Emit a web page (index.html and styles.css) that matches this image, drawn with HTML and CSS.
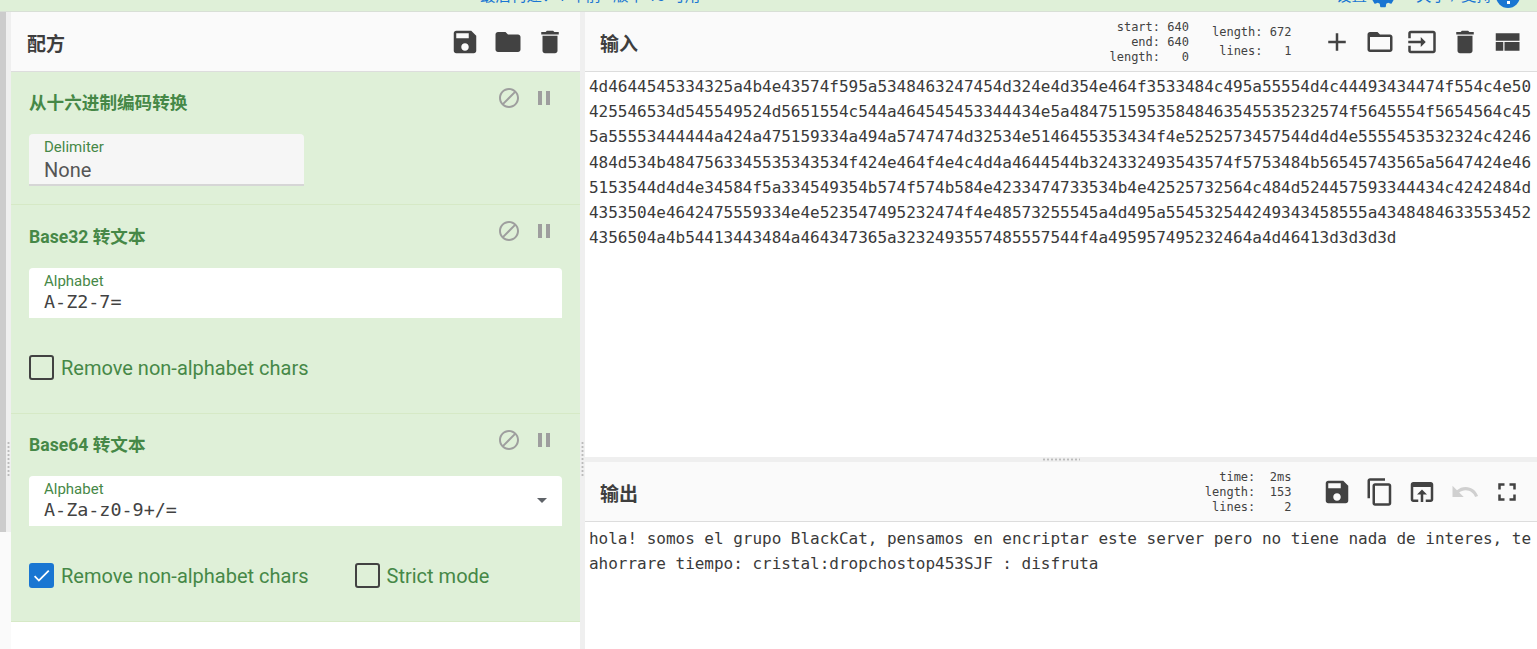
FILE: index.html
```html
<!DOCTYPE html>
<html lang="zh">
<head>
<meta charset="utf-8">
<title>CyberChef</title>
<link rel="stylesheet" href="styles.css">
</head>
<body>
<svg class="sprite" width="0" height="0">
  <symbol id="i-save" viewBox="0 0 24 24"><path d="M17 3H5c-1.11 0-2 .9-2 2v14c0 1.1.89 2 2 2h14c1.1 0 2-.9 2-2V7l-4-4zm-5 16c-1.66 0-3-1.34-3-3s1.34-3 3-3 3 1.34 3 3-1.34 3-3 3zm3-10H5V5h10v4z"/></symbol>
  <symbol id="i-folder" viewBox="0 0 24 24"><path d="M10 4H4c-1.1 0-1.99.9-1.99 2L2 18c0 1.1.9 2 2 2h16c1.1 0 2-.9 2-2V8c0-1.1-.9-2-2-2h-8l-2-2z"/></symbol>
  <symbol id="i-delete" viewBox="0 0 24 24"><path d="M6 19c0 1.1.9 2 2 2h8c1.1 0 2-.9 2-2V7H6v12zM19 4h-3.5l-1-1h-5l-1 1H5v2h14V4z"/></symbol>
  <symbol id="i-block" viewBox="0 0 24 24"><path d="M12 2C6.48 2 2 6.48 2 12s4.48 10 10 10 10-4.48 10-10S17.52 2 12 2zM4 12c0-4.42 3.58-8 8-8 1.85 0 3.55.63 4.9 1.69L5.69 16.9C4.63 15.55 4 13.85 4 12zm8 8c-1.85 0-3.55-.63-4.9-1.69L18.31 7.1C19.37 8.45 20 10.15 20 12c0 4.42-3.58 8-8 8z"/></symbol>
  <symbol id="i-pause" viewBox="0 0 24 24"><path d="M6 19h4V5H6v14zm8-14v14h4V5h-4z"/></symbol>
</svg>

<header class="banner">
  <div class="banner-center">最后构建：1 年前 - 版本 10 可用</div>
  <div class="banner-right">
    <span class="banner-link">设置</span>
    <svg class="gear" viewBox="0 0 24 24"><path d="M19.14 12.94c.04-.3.06-.61.06-.94 0-.32-.02-.64-.07-.94l2.03-1.58c.18-.14.23-.41.12-.61l-1.92-3.32c-.12-.22-.37-.29-.59-.22l-2.39.96c-.5-.38-1.03-.7-1.62-.94l-.36-2.54c-.04-.24-.24-.41-.48-.41h-3.84c-.24 0-.43.17-.47.41l-.36 2.54c-.59.24-1.13.57-1.62.94l-2.39-.96c-.22-.08-.47 0-.59.22L2.74 8.87c-.12.21-.08.47.12.61l2.03 1.58c-.05.3-.09.63-.09.94s.02.64.07.94l-2.03 1.58c-.18.14-.23.41-.12.61l1.92 3.32c.12.22.37.29.59.22l2.39-.96c.5.38 1.03.7 1.62.94l.36 2.54c.05.24.24.41.48.41h3.84c.24 0 .44-.17.47-.41l.36-2.54c.59-.24 1.13-.56 1.62-.94l2.39.96c.22.08.47 0 .59-.22l1.92-3.32c.12-.22.07-.47-.12-.61l-2.01-1.58z"/></svg>
    <span class="banner-link about">关于 / 支持</span>
    <span class="info-dot"></span>
  </div>
</header>

<main class="workspace">
  <div class="left-rail"><span class="rail-thumb"></span><span class="grip-v"></span></div>

  <section class="recipe">
    <div class="pane-head">
      <h2 class="pane-title">配方</h2>
      <div class="icons">
        <svg class="icon"><use href="#i-save"/></svg>
        <svg class="icon"><use href="#i-folder"/></svg>
        <svg class="icon"><use href="#i-delete"/></svg>
      </div>
    </div>

    <article class="op op-first">
      <div class="op-head">
        <h3 class="op-title">从十六进制编码转换</h3>
        <div class="op-icons"><svg class="op-icon"><use href="#i-block"/></svg><svg class="op-icon"><use href="#i-pause"/></svg></div>
      </div>
      <div class="field field-short">
        <label class="field-label">Delimiter</label>
        <div class="field-value plain">None</div>
      </div>
    </article>

    <article class="op op-second">
      <div class="op-head">
        <h3 class="op-title">Base32 转文本</h3>
        <div class="op-icons"><svg class="op-icon"><use href="#i-block"/></svg><svg class="op-icon"><use href="#i-pause"/></svg></div>
      </div>
      <div class="field">
        <label class="field-label">Alphabet</label>
        <div class="field-value">A-Z2-7=</div>
      </div>
      <div class="checks">
        <span class="check"><span class="box"></span>Remove non-alphabet chars</span>
      </div>
    </article>

    <article class="op op-third">
      <div class="op-head">
        <h3 class="op-title">Base64 转文本</h3>
        <div class="op-icons"><svg class="op-icon"><use href="#i-block"/></svg><svg class="op-icon"><use href="#i-pause"/></svg></div>
      </div>
      <div class="field">
        <label class="field-label">Alphabet</label>
        <div class="field-value">A-Za-z0-9+/=</div>
        <span class="caret"></span>
      </div>
      <div class="checks">
        <span class="check"><span class="box checked"><svg viewBox="0 0 24 24"><path d="M9 16.17L4.83 12l-1.41 1.41L9 19 21 7l-1.41-1.41z"/></svg></span>Remove non-alphabet chars</span>
        <span class="check"><span class="box"></span>Strict mode</span>
      </div>
    </article>
  </section>

  <div class="mid-gutter"><span class="grip-v"></span></div>

  <section class="io">
    <div class="io-input">
      <div class="pane-head">
        <h2 class="pane-title">输入</h2>
        <div class="head-tools">
          <div class="stats stats-tight"> start: 640
   end: 640
length:   0</div>
          <div class="stats stats-loose">length: 672
 lines:   1</div>
          <div class="icons">
            <svg class="icon" viewBox="0 0 24 24"><path d="M19 13h-6v6h-2v-6H5v-2h6V5h2v6h6v2z"/></svg>
            <svg class="icon" viewBox="0 0 24 24"><path d="M20 6h-8l-2-2H4c-1.1 0-1.99.9-1.99 2L2 18c0 1.1.9 2 2 2h16c1.1 0 2-.9 2-2V8c0-1.1-.9-2-2-2zm0 12H4V8h16v10z"/></svg>
            <svg class="icon" viewBox="0 0 24 24"><path d="M21 3.01H3c-1.1 0-2 .9-2 2V9h2V4.99h18v14.03H3V15H1v4.01c0 1.1.9 1.98 2 1.98h18c1.1 0 2-.88 2-1.98v-14c0-1.11-.9-2-2-2zM11 16l4-4-4-4v3H1v2h10v3z"/></svg>
            <svg class="icon"><use href="#i-delete"/></svg>
            <svg class="icon" viewBox="0 0 24 24"><path d="M3 19h6v-7H3v7zm7 0h12v-7H10v7zM3 5v6h19V5H3z"/></svg>
          </div>
        </div>
      </div>
      <pre class="text-area">4d4644545334325a4b4e43574f595a5348463247454d324e4d354e464f3533484c495a55554d4c44493434474f554c4e50
425546534d545549524d5651554c544a464545453344434e5a48475159535848463545535232574f5645554f5654564c45
5a55553444444a424a475159334a494a5747474d32534e5146455353434f4e5252573457544d4d4e5555453532324c4246
484d534b4847563345535343534f424e464f4e4c4d4a4644544b324332493543574f5753484b56545743565a5647424e46
5153544d4d4e34584f5a334549354b574f574b584e4233474733534b4e42525732564c484d524457593344434c4242484d
4353504e4642475559334e4e523547495232474f4e48573255545a4d495a554532544249343458555a4348484633553452
4356504a4b54413443484a464347365a3232493557485557544f4a495957495232464a4d46413d3d3d3d</pre>
    </div>

    <div class="h-gutter"><span class="grip-h"></span></div>

    <div class="io-output">
      <div class="pane-head">
        <h2 class="pane-title">输出</h2>
        <div class="head-tools">
          <div class="stats stats-tight">  time:  2ms
length:  153
 lines:    2</div>
          <div class="icons">
            <svg class="icon"><use href="#i-save"/></svg>
            <svg class="icon" viewBox="0 0 24 24"><path d="M16 1H4c-1.1 0-2 .9-2 2v14h2V3h12V1zm3 4H8c-1.1 0-2 .9-2 2v14c0 1.1.9 2 2 2h11c1.1 0 2-.9 2-2V7c0-1.1-.9-2-2-2zm0 16H8V7h11v14z"/></svg>
            <svg class="icon" viewBox="0 0 24 24"><path d="M19 4H5c-1.11 0-2 .9-2 2v12c0 1.1.89 2 2 2h4v-2H5V8h14v10h-4v2h4c1.1 0 2-.9 2-2V6c0-1.1-.89-2-2-2zm-7 6l-4 4h3v6h2v-6h3l-4-4z"/></svg>
            <svg class="icon disabled" viewBox="0 0 24 24"><path d="M12.5 8c-2.65 0-5.05.99-6.9 2.6L2 7v9h9l-3.62-3.62c1.39-1.16 3.16-1.88 5.12-1.88 3.54 0 6.55 2.31 7.6 5.5l2.37-.78C21.08 11.03 17.15 8 12.5 8z"/></svg>
            <svg class="icon" viewBox="0 0 24 24"><path d="M7 14H5v5h5v-2H7v-3zm-2-4h2V7h3V5H5v5zm12 7h-3v2h5v-5h-2v3zM14 5v2h3v3h2V5h-5z"/></svg>
          </div>
        </div>
      </div>
      <pre class="text-area output-text">hola! somos el grupo BlackCat, pensamos en encriptar este server pero no tiene nada de interes, te
ahorrare tiempo: cristal:dropchostop453SJF : disfruta</pre>
    </div>
  </section>
</main>
</body>
</html>
```
FILE: styles.css
```css
* { box-sizing: border-box; }

html, body {
  margin: 0;
  height: 649px;
  overflow: hidden;
  background: #fff;
  color: #424242;
  font-family: Roboto, "Noto Sans CJK SC", sans-serif;
}

.sprite { position: absolute; }

.banner {
  height: 12px;
  background: #dff0d8;
  border-bottom: 1px solid #d8dfd6;
  display: flex;
  overflow: hidden;
  position: relative;
  color: #1976d2;
  font-size: 15.5px;
  line-height: 20px;
}
.banner-center {
  margin: -14px 0 0 480px;
  white-space: nowrap;
}
.banner-right {
  margin: -14px 0 0 auto;
  padding-right: 17px;
  display: flex;
  align-items: flex-start;
}
.banner-link { white-space: nowrap; }
.gear {
  width: 28px;
  height: 28px;
  fill: #1976d2;
  margin: -4px 0 0 2px;
}
.about { margin-left: 19px; }
.info-dot {
  width: 24px;
  height: 24px;
  border-radius: 50%;
  background: #1976d2;
  margin: -2px 0 0 4px;
  position: relative;
}
.info-dot::after {
  content: "";
  position: absolute;
  left: 10.5px;
  top: 17px;
  width: 3px;
  height: 3px;
  background: #fff;
}

.workspace {
  display: flex;
  height: 637px;
}

.left-rail {
  width: 11px;
  flex: none;
  background: #fafafa;
  position: relative;
  border-left: 6px solid transparent;
}
.rail-thumb {
  position: absolute;
  left: -6px;
  top: 0;
  width: 6px;
  height: 520px;
  background: #ccc;
}
.left-rail::after {
  content: "";
  position: absolute;
  left: 0;
  top: 0;
  width: 5px;
  height: 520px;
  background: #efefef;
}
.grip-v {
  position: absolute;
  z-index: 1;
  left: 1px;
  top: 429px;
  width: 3px;
  height: 37px;
  background: radial-gradient(circle, #bbb 1px, transparent 1.2px) 0 0 / 3px 4px;
}

.recipe {
  width: 569px;
  flex: none;
  background: #fff;
}

.pane-head {
  height: 60px;
  background: #fafafa;
  border-bottom: 1px solid #ddd;
  display: flex;
  align-items: center;
  justify-content: space-between;
  padding: 0 15px;
}
.recipe .pane-head { padding-left: 16px; }
.pane-title {
  margin: 0;
  padding-top: 6px;
  font-size: 19px;
  font-weight: 700;
  line-height: 24px;
  color: #3e3e3e;
}

.icons {
  display: flex;
  gap: 12.4px;
}
.icon {
  width: 30px;
  height: 30px;
  fill: #424242;
  flex: none;
}
.icon.disabled { fill: #d0d0d0; }

.op {
  background: #dff0d8;
  border-bottom: 1px solid #d6e9c6;
  padding: 0 18px;
}
.op-first { height: 133px; }
.op-second { height: 209px; }
.op-third { height: 208px; }

.op-head {
  height: 62px;
  display: flex;
  justify-content: space-between;
  padding-top: 14px;
}
.op-second .op-head { height: 63px; }
.op-second .op-title { margin-top: 6px; }
.op-title {
  margin: 5px 0 0;
  font-size: 17.6px;
  font-weight: 700;
  line-height: 24px;
  color: #468847;
}
.op-icons {
  display: flex;
  gap: 11px;
  padding-right: 6.5px;
}
.op-icon {
  width: 24px;
  height: 24px;
  fill: #9e9e9e;
}

.field {
  position: relative;
  height: 50px;
  background: #fff;
  border-radius: 4px 4px 0 0;
  padding: 4px 15px 0;
}
.field-short {
  width: 275px;
  height: 52px;
  background: #f6f6f6;
  border-bottom: 2px solid #d6d6d6;
}
.field-label {
  display: block;
  font-size: 15px;
  line-height: 18px;
  color: #468847;
}
.field-value {
  font-family: "DejaVu Sans Mono", monospace;
  font-size: 18.4px;
  line-height: 24px;
  color: #424242;
}
.field-value.plain {
  font-family: Roboto, sans-serif;
  font-size: 20px;
  padding-top: 2px;
  color: #555;
}
.caret {
  position: absolute;
  right: 15px;
  top: 22px;
  border: 5px solid transparent;
  border-top-color: #5f6368;
  border-bottom-width: 0;
}

.checks {
  display: flex;
  gap: 46px;
  padding-top: 37px;
}
.check {
  display: flex;
  align-items: center;
  gap: 7px;
  height: 24px;
  padding-top: 2px;
  font-size: 20px;
  color: #468847;
  white-space: nowrap;
}
.box {
  width: 25px;
  height: 25px;
  margin-top: -2px;
  border: 2px solid #424242;
  border-radius: 3px;
  flex: none;
}
.box.checked {
  background: #1976d2;
  border-color: #1976d2;
}
.box.checked svg {
  display: block;
  width: 21px;
  height: 21px;
  fill: #fff;
}

.mid-gutter {
  width: 5px;
  flex: none;
  background: #efefef;
  position: relative;
}

.io {
  flex: 1;
  min-width: 0;
  display: flex;
  flex-direction: column;
}
.io-input { height: 445px; }
.io-output { flex: 1; }

.head-tools {
  display: flex;
  align-items: center;
}
.stats {
  margin: 0;
  font-family: "DejaVu Sans Mono", monospace;
  font-size: 12px;
  white-space: pre;
  color: #424242;
}
.stats-tight { line-height: 15px; margin-top: 1px; }
.stats-loose { line-height: 19px; margin-left: 23px; }
.stats + .icons { margin-left: 31px; }

.h-gutter {
  height: 5px;
  background: #efefef;
  position: relative;
}
.grip-h {
  position: absolute;
  left: 457px;
  top: 1px;
  width: 38px;
  height: 3px;
  background: radial-gradient(circle, #bbb 1px, transparent 1.2px) 0 0 / 4px 3px;
}

.text-area {
  margin: 0;
  padding: 2px 0 0 4px;
  font-family: "DejaVu Sans Mono", monospace;
  font-size: 16px;
  line-height: 25.2px;
  letter-spacing: -0.02px;
  color: #3a3a3a;
  white-space: pre;
  overflow: hidden;
}
.output-text { padding-top: 4px; }
```
